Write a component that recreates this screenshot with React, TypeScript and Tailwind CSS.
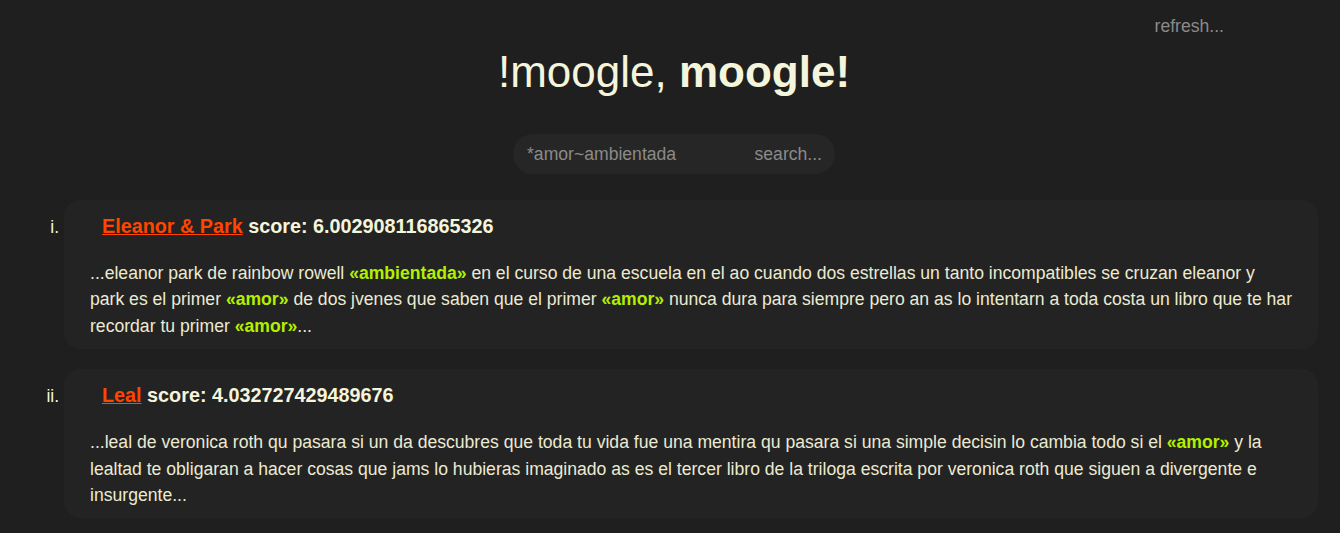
import React from 'react';

interface Result {
  title: string;
  score: string;
  parts: { text: string; hit?: boolean }[];
}

const results: Result[] = [
  {
    title: 'Eleanor & Park',
    score: '6.002908116865326',
    parts: [
      { text: '...eleanor park de rainbow rowell ' },
      { text: '«ambientada»', hit: true },
      { text: ' en el curso de una escuela en el ao cuando dos estrellas un tanto incompatibles se cruzan eleanor y park es el primer ' },
      { text: '«amor»', hit: true },
      { text: ' de dos jvenes que saben que el primer ' },
      { text: '«amor»', hit: true },
      { text: ' nunca dura para siempre pero an as lo intentarn a toda costa un libro que te har recordar tu primer ' },
      { text: '«amor»', hit: true },
      { text: '...' },
    ],
  },
  {
    title: 'Leal',
    score: '4.032727429489676',
    parts: [
      { text: '...leal de veronica roth qu pasara si un da descubres que toda tu vida fue una mentira qu pasara si una simple decisin lo cambia todo si el ' },
      { text: '«amor»', hit: true },
      { text: ' y la lealtad te obligaran a hacer cosas que jams lo hubieras imaginado as es el tercer libro de la triloga escrita por veronica roth que siguen a divergente e insurgente...' },
    ],
  },
];

export default function App() {
  return (
    <div className="min-h-screen bg-[#1f1f1f] text-[#f5f5dc] text-[17.6px] font-['Liberation_Sans',Arial,sans-serif] overflow-hidden">
      {/* top bar */}
      <div className="flex justify-end pr-[116px] pt-[13px] h-[40px]">
        <button className="text-[17.6px] leading-[27px] text-[#8a8a8a]">refresh...</button>
      </div>

      {/* heading */}
      <h1 className="text-center text-[44px] leading-[56px] mt-[4px] pl-[8px]">
        !moogle, <b className="font-bold">moogle!</b>
      </h1>

      {/* search */}
      <div className="flex justify-center mt-[34px] pl-[8px]">
        <div className="flex items-center w-[322px] h-[40px] rounded-full bg-[#262626] pl-[14px] pr-[13px]">
          <input
            className="flex-1 min-w-0 bg-transparent outline-none text-[17.6px] text-[#8a8a8a] placeholder:text-[#8a8a8a]"
            placeholder="*amor~ambientada"
          />
          <button className="text-[17.6px] text-[#8a8a8a]">search...</button>
        </div>
      </div>

      {/* results */}
      <ol className="list-[lower-roman] pl-[64px] pr-[22px] mt-[26px] flex flex-col gap-[20px]">
        {results.map((r) => (
          <li
            key={r.title}
            className="bg-[#232323] rounded-[16px] pl-[26px] pr-[26px] pt-[11px] pb-[10px] text-[17.6px] leading-[26.4px] marker:text-[#f5f5dc]"
          >
            <h3 className="inline-block pl-[12px] text-[19.8px] leading-[30px] font-bold">
              <a href="#" className="text-[#ff4500] underline">
                {r.title}
              </a>{' '}
              score: {r.score}
            </h3>
            <p className="mt-[19px] text-[#ecead2]">
              {r.parts.map((p, i) =>
                p.hit ? (
                  <b key={i} className="font-bold text-[#b2f000]">
                    {p.text}
                  </b>
                ) : (
                  <span key={i}>{p.text}</span>
                )
              )}
            </p>
          </li>
        ))}
      </ol>
    </div>
  );
}
